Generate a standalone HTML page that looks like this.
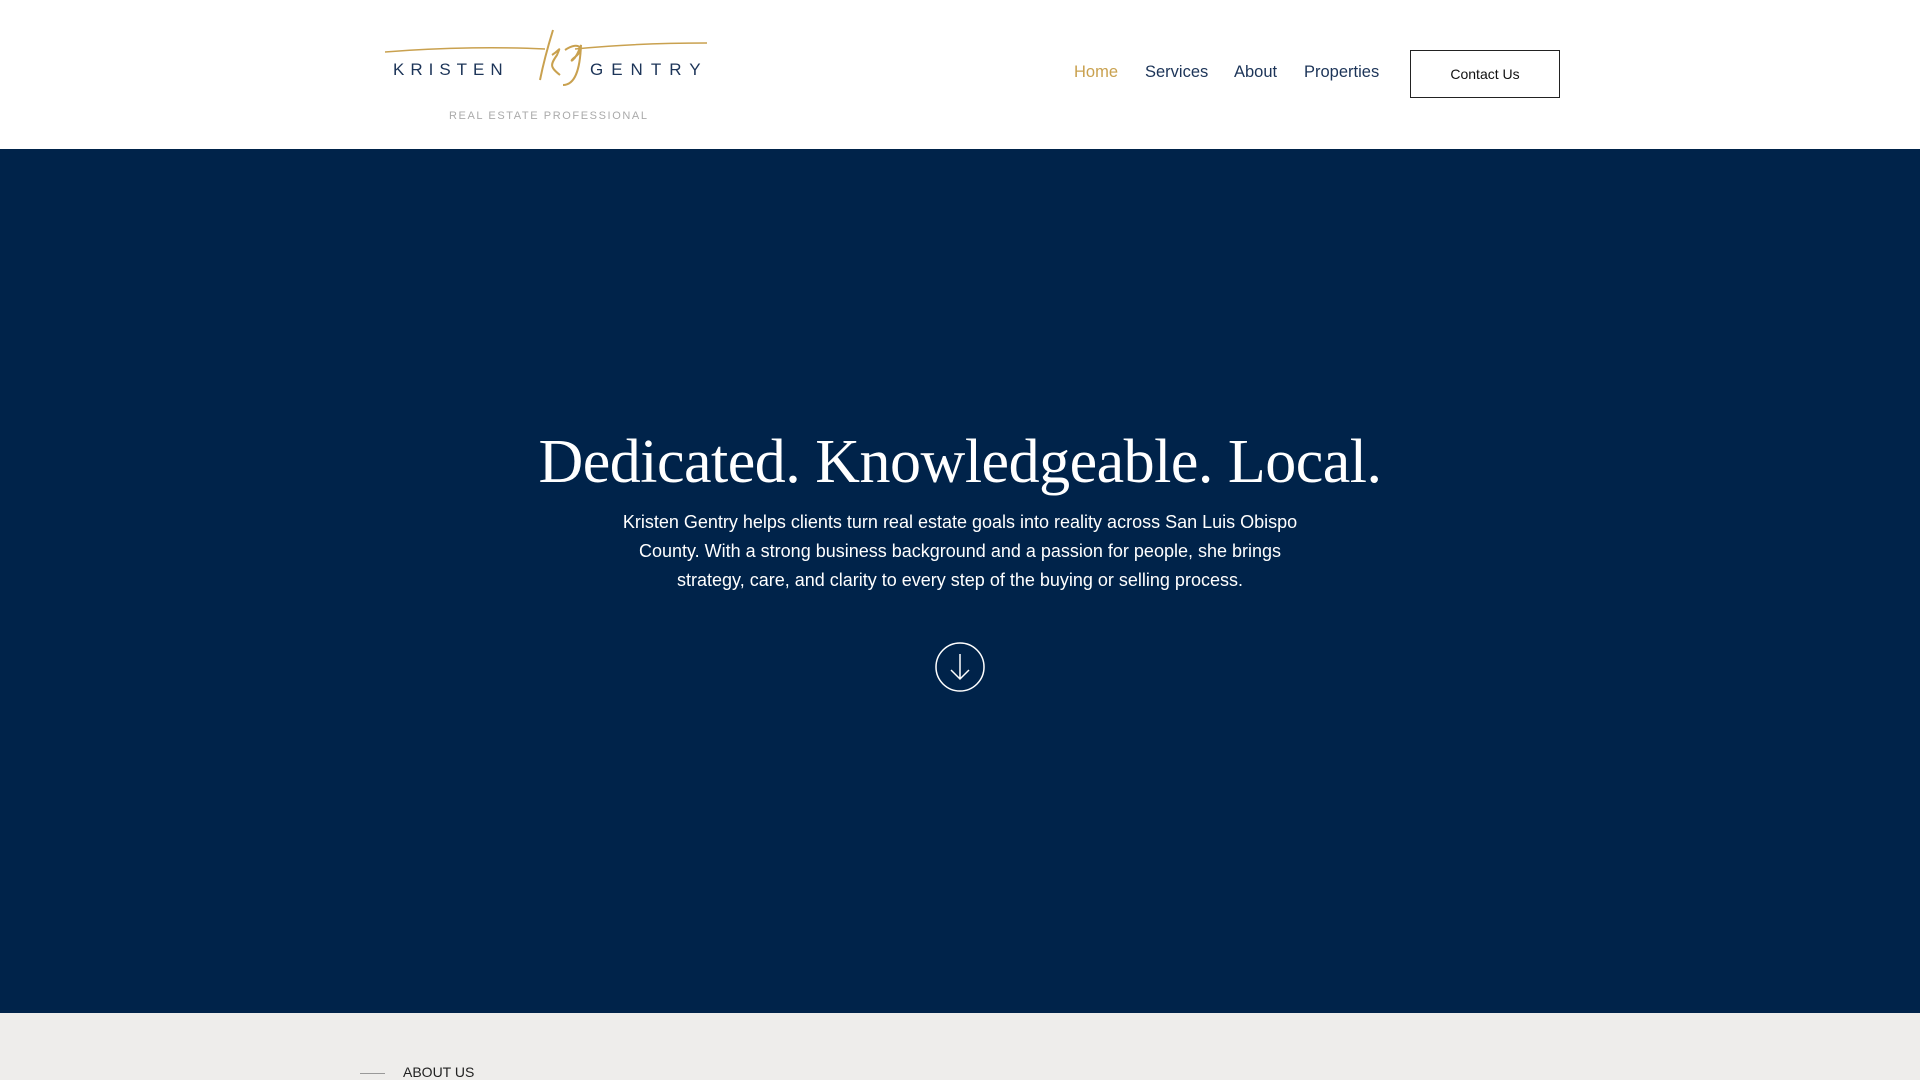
<!DOCTYPE html>
<html><head><meta charset="utf-8"><style>
*{margin:0;padding:0;box-sizing:border-box}
body{width:1920px;height:1080px;overflow:hidden;background:#eeedeb;font-family:"Liberation Sans",sans-serif}
header{position:absolute;top:0;left:0;width:1920px;height:149px;background:#fff}
.logo{position:absolute;left:385px;top:25px;width:330px;height:100px}
nav a{position:absolute;top:63px;font-size:16.5px;color:#1c3458;text-decoration:none}
.btn{position:absolute;left:1410px;top:50px;width:150px;height:48px;border:1px solid #222;font-size:14px;color:#111;text-align:center;line-height:47px}
.hero{position:absolute;top:149px;left:0;width:1920px;height:864px;background:#00234a;color:#fff;text-align:center}
h1{position:absolute;top:278px;width:100%;font-family:"Liberation Serif",serif;font-weight:normal;font-size:62px;letter-spacing:-0.5px}
p{position:absolute;top:359px;left:615px;width:690px;font-size:18px;line-height:29px}
.circ{position:absolute;left:935px;top:493px;width:50px;height:50px}
.about{position:absolute;top:1064px;left:403px;font-size:14px;color:#222}
.line{position:absolute;top:1073px;left:360px;width:25px;height:1px;background:#999}
</style></head><body>
<header>
<svg class="logo" viewBox="0 0 330 100">
<path d="M0 27 C60 22 120 22 160 24 M190 24 C230 20 280 18 322 18" stroke="#c9a14f" stroke-width="1.5" fill="none"/>
<path d="M155 55 C158 40 164 18 168 5 M167 30 C175 25 176 20 172 30 C165 40 165 42 175 50 M180 25 C195 15 200 25 190 32 C182 38 190 38 196 20 C195 45 190 60 178 60" stroke="#c9a14f" stroke-width="2" fill="none"/>
<text x="8" y="50" font-family="Liberation Sans" font-size="17" letter-spacing="6" fill="#1c3458">KRISTEN</text>
<text x="205" y="50" font-family="Liberation Sans" font-size="17" letter-spacing="8" fill="#1c3458">GENTRY</text>
<text x="64" y="94" font-family="Liberation Sans" font-size="11" letter-spacing="1.6" fill="#aaa">REAL ESTATE PROFESSIONAL</text>
</svg>
<nav><a style="left:1074px;color:#c9a14f">Home</a><a style="left:1145px">Services</a><a style="left:1234px">About</a><a style="left:1304px">Properties</a></nav>
<div class="btn">Contact Us</div>
</header>
<div class="hero">
<h1>Dedicated. Knowledgeable. Local.</h1>
<p>Kristen Gentry helps clients turn real estate goals into reality across San Luis Obispo County. With a strong business background and a passion for people, she brings strategy, care, and clarity to every step of the buying or selling process.</p>
<svg class="circ" viewBox="0 0 50 50"><circle cx="25" cy="25" r="24" stroke="#fff" stroke-width="1.5" fill="none"/><path d="M25 12V37M16 28L25 37L34 28" stroke="#fff" stroke-width="1.5" fill="none"/></svg>
</div>
<div class="line"></div><div class="about">ABOUT US</div>
</body></html>
